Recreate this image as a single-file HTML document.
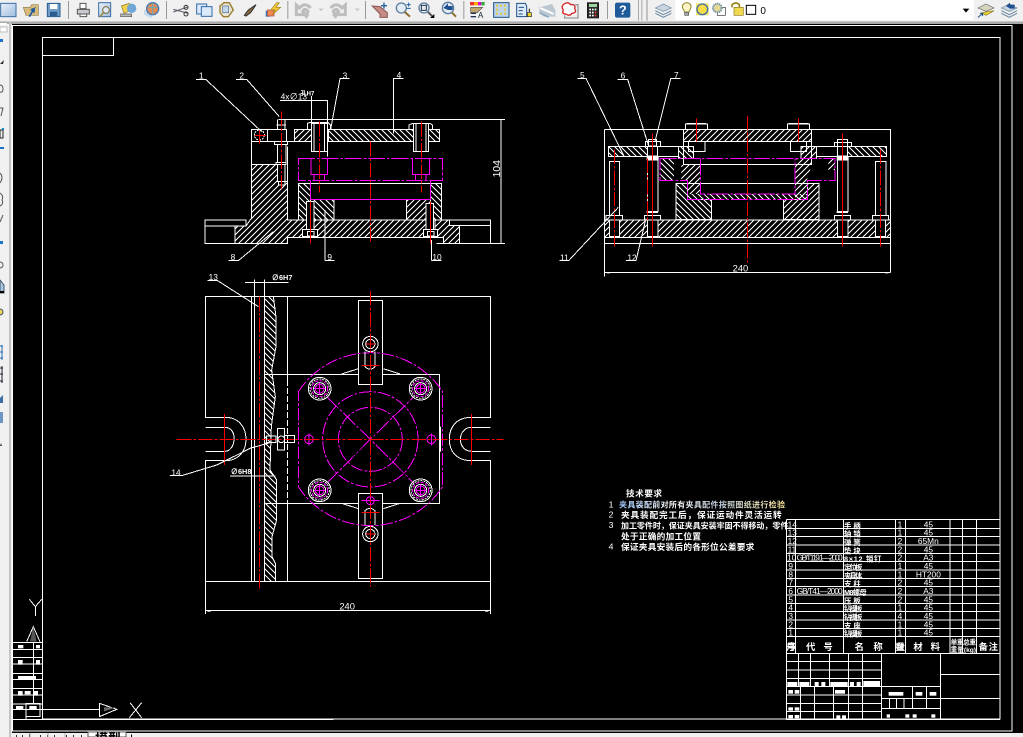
<!DOCTYPE html>
<html lang="zh">
<head>
<meta charset="utf-8">
<title>CAD</title>
<style>
html,body{margin:0;padding:0;width:1023px;height:737px;overflow:hidden;background:#f0f0f0}
svg{display:block;position:absolute;left:0;top:0}
.w{fill:none;stroke:#fff;stroke-width:3;shape-rendering:crispEdges}
.k{fill:#000;stroke:#fff;stroke-width:3;shape-rendering:crispEdges}
.m{fill:none;stroke:#f0f;stroke-width:3;shape-rendering:crispEdges}
.md{fill:none;stroke:#f0f;stroke-width:3;stroke-dasharray:50 6 8 6;shape-rendering:crispEdges}
.ds{fill:none;stroke:#f0f;stroke-width:3;stroke-dasharray:38 6 8 6;shape-rendering:crispEdges}
.r{fill:none;stroke:#f00;stroke-width:3;stroke-dasharray:44 6 8 6;shape-rendering:crispEdges}
.rs{fill:none;stroke:#f00;stroke-width:3;shape-rendering:crispEdges}
.h1{fill:url(#h1);stroke:#fff;stroke-width:3;shape-rendering:crispEdges}
.h2{fill:url(#h2);stroke:#fff;stroke-width:3;shape-rendering:crispEdges}
.f1{fill:url(#h1);stroke:none}
.f2{fill:url(#h2);stroke:none}
text{fill:#fff;font-family:"Liberation Sans","Noto Sans CJK SC",sans-serif}
.n{font-size:25px}
.c{font-size:24px;font-weight:bold;font-family:"Noto Sans CJK SC","Liberation Sans",sans-serif}
.b{fill:#fff;stroke:none}
</style>
</head>
<body>
<svg width="1023" height="737" viewBox="0 0 1023 737" xmlns="http://www.w3.org/2000/svg">
<defs>
<pattern id="h1" width="18" height="18" patternUnits="userSpaceOnUse"><path d="M-2 20L20-2M-2 2L2-2M16 20L20 16" stroke="#fff" stroke-width="3" fill="none" shape-rendering="crispEdges"/></pattern>
<pattern id="h2" width="18" height="18" patternUnits="userSpaceOnUse"><path d="M-2-2L20 20M-2 16L2 20M16-2L20 2" stroke="#fff" stroke-width="3" fill="none" shape-rendering="crispEdges"/></pattern>
<linearGradient id="bl" x1="0" y1="0" x2="1" y2="1"><stop offset="0" stop-color="#eaf2fb"/><stop offset="1" stop-color="#9dbbdc"/></linearGradient>
<linearGradient id="tx" x1="0" y1="0" x2="1" y2="0"><stop offset="0" stop-color="#9ec8ff"/><stop offset=".3" stop-color="#fff"/><stop offset=".6" stop-color="#bcd"/><stop offset="1" stop-color="#ffe9a0"/></linearGradient>
</defs>

<!-- chrome backgrounds -->
<rect x="0" y="0" width="1023" height="737" fill="#f0f0f0"/>
<rect x="0" y="21" width="1023" height="1" fill="#c8c8c8"/>
<rect x="0" y="22" width="1023" height="2" fill="#a9a9a9"/>
<rect x="9" y="22" width="2" height="715" fill="#c4c4c4"/>
<rect x="0" y="23" width="7" height="2" fill="#fff"/>
<rect x="0" y="27" width="7" height="5" fill="#fff" stroke="#bbb"/>

<!-- toolbar left -->
<g transform="scale(.33333)">
 <rect x="2" y="10" width="46" height="40" fill="url(#bl)" stroke="#3a6ea5" stroke-width="3"/>
 <path d="M70 22H90L95 14H115V46H78Z" fill="#d6bb7a" stroke="#8b7b48" stroke-width="2"/><path d="M88 50L102 26L92 30M102 26V38" stroke="#1c5a9e" stroke-width="5" fill="none"/>
 <path d="M142 10H180V50H142Z" fill="#6f9cc8" stroke="#2a5c90" stroke-width="3"/><rect x="150" y="12" width="22" height="15" fill="#fff"/><rect x="150" y="35" width="22" height="13" fill="#2a5c90"/>
 <rect x="204" y="3" width="3" height="54" fill="#999"/>
 <path d="M240 10H258V26H240Z" fill="#fff" stroke="#555" stroke-width="3"/><path d="M232 28H268V42H232Z" fill="#c9c9cf" stroke="#555" stroke-width="3"/><path d="M240 42H260V50H240Z" fill="#fff" stroke="#555" stroke-width="3"/>
 <rect x="296" y="8" width="36" height="42" fill="url(#bl)" stroke="#3a6ea5" stroke-width="3"/><circle cx="318" cy="30" r="10" fill="#dfe9f4" stroke="#7a6a3a" stroke-width="3"/><path d="M310 38L300 50" stroke="#a08a4a" stroke-width="5"/>
 <path d="M364 18L388 10L396 30L372 40Z" fill="#f2d04c" stroke="#8b7b20" stroke-width="2"/><circle cx="395" cy="25" r="14" fill="#6ea7d8"/><path d="M362 42H395V50H362Z" fill="#bbb" stroke="#555" stroke-width="2"/>
 <path d="M432 28L455 40V55L432 44Z" fill="#c5d7ea"/><circle cx="458" cy="26" r="18" fill="#e38b55" stroke="#3a77b5" stroke-width="4"/><path d="M445 22H472M458 8V44" stroke="#6ab" stroke-width="3"/>
 <rect x="498" y="3" width="3" height="54" fill="#999"/>
 <path d="M520 28L565 40M520 36L565 20" stroke="#5a5a6a" stroke-width="3"/><circle cx="558" cy="22" r="6" fill="none" stroke="#333" stroke-width="3"/><circle cx="558" cy="42" r="6" fill="none" stroke="#333" stroke-width="3"/>
 <rect x="590" y="12" width="30" height="30" fill="#dceafa" stroke="#2e6aa8" stroke-width="3"/><rect x="604" y="20" width="32" height="29" fill="#dceafa" stroke="#2e6aa8" stroke-width="3"/>
 <path d="M660 18L672 8H688L700 30L685 50H670L660 38Z" fill="#e7e3d4" stroke="#9a7b2c" stroke-width="4"/><rect x="668" y="18" width="18" height="20" fill="#c4d7ea" stroke="#57708a" stroke-width="2"/>
 <path d="M733 46L745 30L768 14L752 38L738 48Z" fill="#8a6a40" stroke="#333" stroke-width="3"/>
 <rect x="797" y="32" width="14" height="18" fill="#3a77c2"/><rect x="802" y="30" width="20" height="18" fill="#ec8a52" stroke="#a44" stroke-width="2"/><path d="M830 8L812 30H826L818 44L842 22H828L838 8Z" fill="#f3c93a" stroke="#a58015" stroke-width="2"/>
 <rect x="862" y="3" width="3" height="54" fill="#999"/>
 <path d="M932 24Q915 5 898 24L889 15V44H918L908 34Q915 22 924 34L918 54" fill="none" stroke="#bdbdbd" stroke-width="9"/>
 <path d="M955 26H971L963 33Z" fill="#c4c4c4"/>
 <path d="M992 24Q1009 5 1026 24L1036 15V44H1006L1016 34Q1009 22 1000 34L1008 54" fill="none" stroke="#bdbdbd" stroke-width="9"/>
 <path d="M1064 26H1080L1072 33Z" fill="#c4c4c4"/>
 <rect x="1095" y="3" width="3" height="54" fill="#999"/>
 <path d="M1117 18L1140 42V52H1162V38L1140 20Z" fill="#c78a86" stroke="#8a5552" stroke-width="3"/><path d="M1152 8V26M1143 17H1161" stroke="#1f5f9e" stroke-width="4"/>
 <circle cx="1204" cy="24" r="15" fill="#e4edf6" stroke="#5d7f9f" stroke-width="4"/><path d="M1214 36L1230 50" stroke="#8b6d2f" stroke-width="6"/><path d="M1220 14H1232M1226 8V20M1220 25H1232" stroke="#1f5f9e" stroke-width="3"/>
 <circle cx="1272" cy="24" r="15" fill="#e4edf6" stroke="#5d7f9f" stroke-width="4"/><rect x="1264" y="16" width="15" height="15" fill="none" stroke="#234" stroke-width="3"/><path d="M1284 36L1296 48" stroke="#555" stroke-width="6"/><path d="M1290 54H1303V42Z" fill="#000"/>
 <circle cx="1344" cy="24" r="17" fill="#e4edf6" stroke="#5d7f9f" stroke-width="4"/><path d="M1330 24L1344 10V18H1358V30H1344Z" fill="#1f4f8e"/><path d="M1356 38L1368 50" stroke="#8b6d2f" stroke-width="6"/>
 <rect x="1390" y="3" width="3" height="54" fill="#999"/>
 <rect x="1410" y="6" width="12" height="10" fill="#e33"/><rect x="1422" y="6" width="12" height="10" fill="#fa0"/><rect x="1434" y="6" width="10" height="10" fill="#d0d"/><rect x="1444" y="6" width="10" height="10" fill="#3a3"/>
 <path d="M1412 22H1448L1432 38H1412Z" fill="#bfa56d" stroke="#555" stroke-width="2"/><text x="1434" y="54" style="font-size:24px;fill:#123">A</text><path d="M1412 40H1428M1412 50H1428" stroke="#235" stroke-width="4"/>
 <rect x="1481" y="8" width="46" height="44" fill="#bcd5ea" stroke="#1d4f86" stroke-width="3"/>
 <g fill="#e3c63c"><rect x="1488" y="14" width="6" height="6"/><rect x="1500" y="14" width="6" height="6"/><rect x="1512" y="14" width="6" height="6"/><rect x="1488" y="26" width="6" height="6"/><rect x="1512" y="26" width="6" height="6"/><rect x="1500" y="38" width="6" height="6"/><rect x="1488" y="38" width="6" height="6"/><rect x="1512" y="38" width="6" height="6"/></g>
</g>

<!-- toolbar right -->
<g transform="translate(512,0) scale(.33333)">
 <path d="M14 10H40L44 18V50H14Z" fill="#dceafa" stroke="#1d4f86" stroke-width="3"/><path d="M20 22H36M20 32H32M20 42H32" stroke="#1d4f86" stroke-width="3"/><rect x="46" y="38" width="12" height="12" fill="#f0d030" stroke="#222" stroke-width="2"/><path d="M52 26V36" stroke="#111" stroke-width="3"/>
 <path d="M82 22L120 12L130 30L130 50H95L82 38Z" fill="#bcc7d2"/><path d="M85 24L125 42" stroke="#fff" stroke-width="6"/><path d="M82 38L110 52" stroke="#7aa0c0" stroke-width="4"/>
 <path d="M190 14H198V54H158V46" fill="none" stroke="#999" stroke-width="4"/><path d="M156 12Q168 4 176 14Q192 12 188 26Q196 38 180 40Q172 50 162 42Q148 42 154 30Q146 20 156 12Z" fill="#fff" stroke="#d42626" stroke-width="4"/>
 <rect x="226" y="8" width="34" height="46" fill="#2a2a2a" stroke="#111" stroke-width="2"/><rect x="231" y="12" width="24" height="9" fill="#9ed49e"/><g fill="#fff"><rect x="232" y="26" width="5" height="5"/><rect x="240" y="26" width="5" height="5"/><rect x="248" y="26" width="5" height="5"/><rect x="232" y="35" width="5" height="5"/><rect x="240" y="35" width="5" height="5"/><rect x="232" y="44" width="5" height="5"/><rect x="240" y="44" width="5" height="5"/></g><g fill="#e33"><rect x="248" y="35" width="5" height="5"/><rect x="248" y="44" width="5" height="5"/></g>
 <rect x="285" y="3" width="3" height="54" fill="#999"/>
 <rect x="309" y="8" width="46" height="45" rx="6" fill="#1f5a9a"/><text x="321" y="44" style="font-size:38px;font-weight:bold;fill:#fff">?</text>
 <rect x="378" y="0" width="3" height="62" fill="#aaa"/><rect x="388" y="0" width="3" height="62" fill="#aaa"/><rect x="403" y="0" width="4" height="62" fill="#aaa"/>
 <path d="M430 24L454 12L478 24L454 34Z" fill="#c9d6e2" stroke="#67839e" stroke-width="2"/><path d="M430 32L454 44L478 32M430 40L454 52L478 40" fill="none" stroke="#67839e" stroke-width="3"/>
 <rect x="490" y="0" width="896" height="60" rx="6" fill="#fff"/>
 <path d="M524 8Q538 10 537 22Q533 32 531 36H518Q516 32 511 22Q511 10 524 8Z" fill="#fff6c8" stroke="#8f8a2c" stroke-width="3"/><rect x="518" y="37" width="12" height="9" fill="#aaa" stroke="#555" stroke-width="2"/>
 <rect x="552" y="10" width="38" height="36" fill="#eee26a"/><circle cx="571" cy="28" r="16" fill="#f6dc46" stroke="#3e6ea3" stroke-width="4"/>
 <rect x="616" y="22" width="24" height="24" fill="#fff" stroke="#333" stroke-width="2"/><circle cx="616" cy="24" r="13" fill="#e2d998" stroke="#7892ac" stroke-width="6" stroke-dasharray="4 2"/>
 <path d="M660 22V14Q672 4 682 14V24" fill="none" stroke="#96861c" stroke-width="5"/><rect x="666" y="22" width="28" height="24" fill="#f0d94e" stroke="#8a7a18" stroke-width="2"/>
 <rect x="703" y="16" width="28" height="27" fill="#fff" stroke="#000" stroke-width="3"/>
 <text x="745" y="42" style="font-size:30px;fill:#000">0</text>
 <path d="M1352 26H1372L1362 38Z" fill="#000"/>
 <path d="M1398 24L1422 12L1446 24L1422 34Z" fill="#d6d6c0" stroke="#666" stroke-width="2"/><path d="M1410 38L1446 32L1422 46Z" fill="#f0d93c" stroke="#8a7a18" stroke-width="2"/><path d="M1398 52L1412 40M1412 40H1404M1412 40V48" stroke="#1d4f86" stroke-width="3" fill="none"/>
 <path d="M1468 24L1492 12L1515 24L1492 34Z" fill="#c9d6e2" stroke="#67839e" stroke-width="2"/><path d="M1468 32L1492 44L1515 32M1468 40L1492 52L1515 40" fill="none" stroke="#67839e" stroke-width="3"/><path d="M1482 18L1494 8V14H1508V26H1494Z" fill="#1f4f8e"/>
</g>

<!-- left toolbar fragments -->
<g>
 <rect x="0" y="39" width="3" height="3" fill="#1a73c8"/>
 <path d="M0 64L4 60L3 64Z" fill="#222"/>
 <path d="M0 85Q3 85 3 89Q3 93 0 92" fill="none" stroke="#555"/>
 <path d="M0 108L3 108L1 116" fill="none" stroke="#555"/>
 <rect x="0" y="130" width="3" height="8" fill="none" stroke="#222"/><rect x="2" y="128" width="2" height="2" fill="#18c"/>
 <rect x="0" y="147" width="4" height="2" fill="#1a73c8"/>
 <path d="M0 173Q4 177 0 183" fill="none" stroke="#555"/>
 <path d="M0 193Q4 196 2 200Q4 204 0 206" fill="none" stroke="#555"/>
 <path d="M0 222L3 215" stroke="#555"/>
 <rect x="0" y="241" width="3" height="3" fill="#1a73c8"/>
 <circle cx="0" cy="265" r="3" fill="none" stroke="#555"/>
 <path d="M0 280L4 285V293H0Z" fill="#a9c6e2" stroke="#456"/><rect x="0" y="291" width="4" height="2" fill="#000"/>
 <circle cx="0" cy="312" r="3" fill="#efd25a" stroke="#456"/>
 <path d="M0 346H3M0 352H3M0 358H3M2 345V360" stroke="#2a6cb0"/>
 <path d="M0 368H3M0 374H3M0 381H3M2 366V383" stroke="#223"/>
 <path d="M0 398L3 395V403H0Z" fill="#3a6ea5"/>
 <rect x="0" y="412" width="3" height="11" fill="#6c95c4"/>
 <path d="M0 446L1 443L2 446Z" fill="#333"/>
</g>

<!-- canvas -->
<rect x="12" y="24" width="1011" height="709" fill="#000"/>
<rect x="12.5" y="25.5" width="999.5" height="705.5" fill="none" stroke="#fff" stroke-width="1" shape-rendering="crispEdges"/>
<rect x="42.5" y="37.5" width="957.5" height="681.5" fill="none" stroke="#fff" stroke-width="1" shape-rendering="crispEdges"/>
<rect x="42.5" y="37.5" width="71" height="18" fill="none" stroke="#fff" stroke-width="1" shape-rendering="crispEdges"/>

<!-- FRONT VIEW -->
<g transform="translate(190,70) scale(.33333)">
 <path class="h1" d="M184 283H262V335H293V450H350V502H293V520H135V468H168L184 445Z"/>
 <path class="w" d="M45 450H168V468H45ZM45 468V520H135M293 502H760V520H902V450H778V467H902M293 450H755"/>
 <path class="h1" d="M372 450H710V502H372Z"/>
 <path class="h1" d="M735 450H778V467H808V520H760V502H735Z"/>
 <path class="w" d="M184 178V445M184 283H262M293 230V450M184 178H232V215H184ZM232 178H262M232 215H262M262 178H290V215H262M293 215H313"/>
 <path class="h1" d="M313 178H365V215H313Z"/>
 <path class="h2" d="M415 178H670V215H415Z"/>
 <path class="h2" d="M715 178H748V215H715Z"/>
 <path class="w" d="M352 178V160L362 157H413L422 165V178M657 178V165L668 160H720L727 165V178"/>
 <path class="w" d="M364 160H372V245H364ZM404 160H413V245H404ZM364 245H413M372 160H404M670 160H678V245H670ZM708 160H716V245H708ZM670 245H716"/>
 <path class="w" d="M262 148V178M285 150V178M259 165H288M253 215H293V224H253ZM262 224H288V278H262ZM258 278H288V283H258Z"/>
 <path class="k" d="M262 283H285V335H262ZM265 335H285V345H265Z"/>
 <circle class="w" cx="208" cy="195" r="15" stroke-dasharray="6 3"/>
 <path class="h2" d="M325 340H362V450H325Z"/>
 <path class="h2" d="M362 388H432V450H362Z"/>
 <path class="h1" d="M650 388H722V450H650Z"/>
 <path class="h2" d="M722 340H755V450H722Z"/>
 <path class="w" d="M325 340H755"/>
 <path class="k" d="M350 395H372V478H350ZM708 400H730V478H708ZM337 478H382V500H337ZM700 478H742V500H700Z"/>
 <path class="w" d="M352 484H372V498H352ZM712 484H732V498H712Z"/>
 <path class="md" d="M325 265H758V332H325Z"/>
 <path class="m" d="M363 267V313H413V267M372 313V332M404 313V332M667 267V313H718V267M677 313V332M708 313V332M362 332V388H722V332"/>
 <path class="r" d="M541 215V520M275 125V355"/>
 <path class="r" d="M388 155V368M694 155V368"/>
 <path class="rs" d="M361 395V520M722 395V520M208 180V220M195 197H228"/>
 <path class="w" d="M265 148H945M933 148V520M740 520H945"/>
 <path class="w" d="M270 92H412V260M364 78V160"/>
 <text x="272" y="88" style="font-size:25px">4x∅13</text>
 <text x="332" y="76" style="font-size:18px;font-weight:bold">孔H7</text>
 <path class="w" d="M18 28H47L215 185M138 28H170L268 140M478 26H450L422 178M640 26H610V190M115 572H145L250 485M405 572V420M405 572H434M724 572V510M724 572H755"/>
 <text x="27" y="26" class="n">1</text><text x="148" y="26" class="n">2</text><text x="458" y="26" class="n">3</text><text x="620" y="24" class="n">4</text>
 <text x="122" y="570" class="n">8</text><text x="412" y="570" class="n">9</text><text x="727" y="570" class="n">10</text>
 <text transform="translate(930,322) rotate(-90)" style="font-size:31px">104</text>
</g>

<!-- SIDE VIEW -->
<g transform="translate(550,70) scale(.33333)">
 <path class="h1" d="M163 450H1022V502H163Z"/>
 <path class="h1" d="M400 178H785V215H400Z"/>
 <path class="h2" d="M175 229H293V260H175Z"/>
 <path class="h2" d="M893 229H1010V260H893Z"/>
 <path class="w" d="M293 229H385M293 260H385M800 229H893M800 260H893"/>
 <!-- work-piece hatch -->
 <path class="f2" d="M332 265H372V331H332Z"/>
 <path class="f1" d="M394 285H452V372H412V331H394Z"/>
 <path class="f1" d="M735 285H785L770 331H772V388H735Z"/>
 <path class="f1" d="M835 265H855V300H835Z"/>
 <path class="f1" d="M740 265H785V283H740Z"/>
 <path class="f2" d="M412 372H772V388H412Z"/>
 <path class="h2" d="M378 340H412V388H485V448H378Z"/>
 <path class="h1" d="M772 340H807V448H700V388H772Z"/>
 <path class="h2" d="M385 230H430V265H385Z"/>
 <path class="h1" d="M753 230H800V265H753Z"/>
 <path class="w" d="M407 178V162H473V178M712 178V162H778V178M409 160H468M716 160H775M400 215V283H785V215M415 215V245H465V215M721 215V245H770V215M378 340H807M163 178H1022V607M163 178V620M163 502H1022M163 520H1022"/>
 <path class="w" d="M178 275H209V436H178ZM292 270H324V425H292ZM862 270H894V425H862ZM976 275H1008V436H976Z"/>
 <path class="k" d="M168 436H218V450H168ZM283 436H332V450H283ZM853 436H902V450H853ZM967 436H1016V450H967ZM178 450H208V500H178ZM292 450H324V500H292ZM862 450H894V500H862ZM976 450H1006V500H976Z"/>
 <path class="w" d="M286 215H332V229H286ZM295 208H320V228H295ZM292 229H322V258H292ZM853 217H904V229H853ZM862 208H892V229H862ZM862 229H892V258H862Z"/>
 <rect x="290" y="259" width="36" height="12" fill="#fff"/><rect x="860" y="259" width="36" height="12" fill="#fff"/>
 <rect x="290" y="423" width="34" height="6" fill="#fff"/><rect x="860" y="423" width="34" height="6" fill="#fff"/>
 <path class="md" d="M330 265H855V331H772V388H412V331H330Z"/>
 <path class="md" d="M452 265V372H735V265"/>
 <path class="r" d="M592 138V578M194 238V530M992 238V530"/>
 <path class="rs" d="M440 145V215M745 145V215M307 190V530M877 190V530"/>
 <path class="r" d="M292 265V450"/>
 <path class="w" d="M163 607H1022"/>
 <rect x="170" y="607" width="10" height="3" fill="#fff"/><rect x="1005" y="607" width="10" height="3" fill="#fff"/>
 <text x="548" y="605" style="font-size:28px">240</text>
 <path class="w" d="M82 25H108L220 255M202 28H233L295 225M392 26H362L315 215M28 572H56L205 412M228 572H258L288 445"/>
 <text x="90" y="24" class="n">5</text><text x="212" y="26" class="n">6</text><text x="372" y="24" class="n">7</text><text x="30" y="572" class="n">11</text><text x="232" y="572" class="n">12</text>
</g>

<!-- TOP VIEW -->
<g transform="translate(170,270) scale(.33333)">
 <path class="w" d="M106 79H962V442H905C860 442 838 470 838 508C838 545 860 572 905 572H962V934H106V572H165C205 572 228 545 228 508C228 470 205 442 165 442H106V79Z"/>
 <path class="w" d="M106 472H165C205 472 198 544 165 544H106M962 472H905C860 472 860 544 905 544H962"/>
 <path class="h2" d="M284 79H310L318 140V230L305 300L316 380L304 470L300 600L320 630V750L306 800V860L316 880V934H284Z"/>
 <path class="w" d="M245 79V934M253 79V934M284 79V934M352 79V330M352 700V934M245 79H284M245 934H284"/>
 <path class="w" d="M352 330V700" style="stroke-dasharray:18 6"/>
 <path class="w" d="M284 313H808V700H284Z"/>
 <rect x="565" y="91" width="73" height="253" class="k"/>
 <rect x="565" y="670" width="73" height="256" class="k"/>
 <path class="w" d="M515 312L565 296M640 296L690 312M515 700L565 716M640 716L690 700"/>
 <circle class="ds" cx="601" cy="508" r="143"/>
 <circle class="ds" cx="601" cy="508" r="96"/>
 <path class="ds" d="M385 365A259 259 0 0 1 818 365V650A259 259 0 0 1 385 650Z"/>
 <path class="md" d="M470 380L601 508L732 380M470 640L601 508L732 640"/>
 <circle class="m" cx="417" cy="508" r="13"/><circle class="m" cx="784" cy="508" r="13"/><path class="m" d="M417 490V526M784 490V526"/>
 <circle class="w" cx="449" cy="356" r="34"/><circle class="w" cx="449" cy="356" r="29" stroke-dasharray="6 3"/><circle class="m" cx="449" cy="356" r="24" stroke-dasharray="10 4"/><circle class="w" cx="449" cy="356" r="18"/><circle class="m" cx="449" cy="356" r="13"/>
 <circle class="w" cx="752" cy="356" r="34"/><circle class="w" cx="752" cy="356" r="29" stroke-dasharray="6 3"/><circle class="m" cx="752" cy="356" r="24" stroke-dasharray="10 4"/><circle class="w" cx="752" cy="356" r="18"/><circle class="m" cx="752" cy="356" r="13"/>
 <circle class="w" cx="449" cy="661" r="34"/><circle class="w" cx="449" cy="661" r="29" stroke-dasharray="6 3"/><circle class="m" cx="449" cy="661" r="24" stroke-dasharray="10 4"/><circle class="w" cx="449" cy="661" r="18"/><circle class="m" cx="449" cy="661" r="13"/>
 <circle class="w" cx="752" cy="661" r="34"/><circle class="w" cx="752" cy="661" r="29" stroke-dasharray="6 3"/><circle class="m" cx="752" cy="661" r="24" stroke-dasharray="10 4"/><circle class="w" cx="752" cy="661" r="18"/><circle class="m" cx="752" cy="661" r="13"/>
 <path class="m" d="M432 356H466M449 338V374M735 356H769M752 338V374M432 661H466M449 644V678M735 661H769M752 644V678"/>
 <path class="w" d="M585 245V290Q600 305 615 290V245M585 765V722Q600 708 615 722V765"/>
 <path class="m" d="M575 692H628M601 678V706"/><circle class="m" cx="601" cy="692" r="12"/>
 <circle class="w" cx="601" cy="222" r="23"/><circle class="w" cx="601" cy="222" r="14"/><circle class="w" cx="601" cy="792" r="23"/><circle class="w" cx="601" cy="792" r="14"/>
 <path class="rs" d="M574 287H628M574 728H628M588 222H615M601 209V235M588 792H615M601 779V805"/>
 <path class="r" d="M601 63V950M20 508H1000"/>
 <path class="r" d="M268 79V962"/>
 <path class="rs" d="M163 432V585M904 432V585"/>
 <path class="w" d="M290 498H318V518H290ZM322 476H344V540H322ZM344 496H374V518H344Z"/>
 <circle class="w" cx="334" cy="508" r="10"/>
 <rect x="808" y="470" width="5" height="75" fill="#fff"/>
 <path class="w" d="M106 934V1032M962 934V1032M106 1022H962"/>
 <rect x="112" y="1022" width="10" height="3" fill="#fff"/><rect x="945" y="1022" width="10" height="3" fill="#fff"/>
 <text x="508" y="1018" style="font-size:28px">240</text>
 <path class="w" d="M225 37H355M253 28V80M284 28V80M180 618H316"/>
 <text x="305" y="30" style="font-size:22px;font-weight:bold">∅6H7</text>
 <text x="182" y="612" style="font-size:22px;font-weight:bold">∅6H8</text>
 <path class="w" d="M112 32H143L265 110M0 617H35L140 585L215 548L240 535L300 518"/>
 <text x="116" y="30" class="n">13</text><text x="4" y="616" class="n">14</text>
</g>

<!-- TITLE BLOCK + NOTES -->
<g transform="translate(600,480) scale(.33333)">
 <text x="78" y="50" class="c" style="font-size:26px" textLength="108" lengthAdjust="spacing">技术要求</text>
 <text x="26" y="82" style="font-size:26px">1</text>
 <text x="57" y="82" class="c" style="font-size:24px;fill:url(#tx)" textLength="498" lengthAdjust="spacing">夹具装配前对所有夹具配件按照图纸进行检验</text>
 <text x="26" y="112" style="font-size:26px">2</text>
 <text x="63" y="114" class="c" style="font-size:26px" textLength="482" lengthAdjust="spacing">夹具装配完工后，保证运动件灵活运转</text>
 <text x="26" y="144" style="font-size:26px">3</text>
 <text x="63" y="146" class="c" style="font-size:24px" textLength="502" lengthAdjust="spacing">加工零件时，保证夹具安装牢固不得移动，零件</text>
 <text x="63" y="178" class="c" style="font-size:26px" textLength="240" lengthAdjust="spacing">处于正确的加工位置</text>
 <text x="26" y="208" style="font-size:26px">4</text>
 <text x="63" y="210" class="c" style="font-size:26px" textLength="400" lengthAdjust="spacing">保证夹具安装后的各形位公差要求</text>

 <path class="w" d="M560 118H1200V718M560 118V718H1200M560 145H1200M560 170H1200M560 195H1200M560 220H1200M560 245H1200M560 270H1200M560 295H1200M560 320H1200M560 345H1200M560 370H1200M560 395H1200M560 420H1200M560 445H1200M560 470H1200M560 520H1200"/>
 <path class="w" d="M587 118V520M730 118V520M886 118V520M916 118V520M1050 118V520M1088 118V520M1130 118V520"/>
 <g class="n">
  <text x="563" y="142">14</text><text x="563" y="167">13</text><text x="563" y="192">12</text><text x="563" y="217">11</text><text x="561" y="242">10</text><text x="565" y="267">9</text><text x="565" y="292">8</text><text x="565" y="317">7</text><text x="565" y="342">6</text><text x="565" y="367">5</text><text x="565" y="392">4</text><text x="565" y="417">3</text><text x="565" y="442">2</text><text x="565" y="467">1</text>
  <text x="590" y="242" textLength="138" lengthAdjust="spacing">GB/T119.1—2000</text>
  <text x="590" y="342" textLength="138" lengthAdjust="spacing">GB/T41—2000</text>
  <g text-anchor="middle">
  <text x="900" y="142">1</text><text x="900" y="167">1</text><text x="900" y="192">2</text><text x="900" y="217">2</text><text x="900" y="242">2</text><text x="900" y="267">1</text><text x="900" y="292">1</text><text x="900" y="317">2</text><text x="900" y="342">2</text><text x="900" y="367">2</text><text x="900" y="392">1</text><text x="900" y="417">4</text><text x="900" y="442">1</text><text x="900" y="467">1</text>
  <text x="985" y="142">45</text><text x="985" y="167">45</text><text x="985" y="192">65Mn</text><text x="985" y="217">45</text><text x="985" y="242">A3</text><text x="985" y="267">45</text><text x="985" y="292">HT200</text><text x="985" y="317">45</text><text x="985" y="342">A3</text><text x="985" y="367">45</text><text x="985" y="392">45</text><text x="985" y="417">45</text><text x="985" y="442">45</text><text x="985" y="467">45</text>
  </g>
 </g>
 <g class="c" style="font-size:22px">
  <text x="732" y="145" textLength="50" lengthAdjust="spacing">手柄</text>
  <text x="732" y="170" textLength="50" lengthAdjust="spacing">轴销</text>
  <text x="732" y="195" textLength="50" lengthAdjust="spacing">弹簧</text>
  <text x="732" y="220" textLength="50" lengthAdjust="spacing">垫块</text>
  <text x="732" y="245" textLength="112" lengthAdjust="spacing">8×12 销钉</text>
  <text x="732" y="270" textLength="55" lengthAdjust="spacing">定位板</text>
  <text x="732" y="295" textLength="55" lengthAdjust="spacing">夹具体</text>
  <text x="732" y="320" textLength="50" lengthAdjust="spacing">支柱</text>
  <text x="732" y="345" textLength="68" lengthAdjust="spacing">M8螺母</text>
  <text x="732" y="370" textLength="50" lengthAdjust="spacing">压板</text>
  <text x="732" y="395" textLength="55" lengthAdjust="spacing">钻模板</text>
  <text x="732" y="420" textLength="55" lengthAdjust="spacing">钻模板</text>
  <text x="732" y="445" textLength="50" lengthAdjust="spacing">支座</text>
  <text x="732" y="470" textLength="55" lengthAdjust="spacing">钻模板</text>
  <text x="560" y="510" style="font-size:28px" textLength="28" lengthAdjust="spacing">序号</text>
  <text x="618" y="510" style="font-size:28px" textLength="80" lengthAdjust="spacing">代号</text>
  <text x="764" y="510" style="font-size:28px" textLength="84" lengthAdjust="spacing">名称</text>
  <text x="887" y="510" style="font-size:26px" textLength="28" lengthAdjust="spacing">数量</text>
  <text x="940" y="510" style="font-size:28px" textLength="80" lengthAdjust="spacing">材料</text>
  <text x="1052" y="494" style="font-size:20px" textLength="76" lengthAdjust="spacing">单重总重</text>
  <text x="1052" y="516" style="font-size:20px" textLength="76" lengthAdjust="spacing">重量(kg)</text>
  <text x="1136" y="510" style="font-size:28px" textLength="58" lengthAdjust="spacing">备注</text>
 </g>
 <path class="w" d="M560 545H845M560 570H845M560 595H845M560 620H845M560 645H845M560 670H845M560 695H845M845 520V718M1022 520V718M1022 583H1200M1022 655H1200M845 620H1022M845 655H1022M845 685H1022"/>
 <path class="w" d="M595 520V620M631 520V620M688 520V620M745 520V620M787 520V620M602 620V718M644 620V718M700 620V718M745 620V718M787 620V718M937 620V655M980 620V655M868 655V685M890 655V685M912 655V685M937 655V685M980 655V685"/>
 <g class="b">
  <rect x="562" y="606" width="30" height="12"/><rect x="598" y="606" width="30" height="12"/><rect x="644" y="606" width="12" height="12"/><rect x="664" y="606" width="12" height="12"/><rect x="691" y="606" width="52" height="12"/><rect x="750" y="606" width="12" height="12"/><rect x="770" y="606" width="12" height="12"/><rect x="790" y="603" width="50" height="15"/>
  <rect x="565" y="630" width="14" height="11"/><rect x="584" y="630" width="14" height="11"/><rect x="705" y="630" width="30" height="11"/><rect x="565" y="682" width="14" height="10"/><rect x="584" y="682" width="14" height="10"/><rect x="565" y="705" width="14" height="10"/><rect x="584" y="705" width="14" height="10"/><rect x="709" y="706" width="12" height="10"/><rect x="726" y="706" width="12" height="10"/>
  <rect x="866" y="636" width="44" height="11"/><rect x="947" y="636" width="20" height="11"/><rect x="989" y="636" width="20" height="11"/><rect x="860" y="703" width="10" height="10"/><rect x="916" y="703" width="12" height="10"/><rect x="938" y="703" width="12" height="10"/><rect x="994" y="703" width="12" height="10"/>
 </g>
</g>

<!-- UCS + side stamp -->
<g transform="translate(0,590) scale(.33333)">
 <path class="w" d="M128 0V388M38 388H128"/>
 <path class="w" d="M38 157H128M38 178H128M38 203H128M38 222H128M38 250H128M38 268H128M38 296H128M38 315H128M38 342H128M38 358H128M100 157V342M78 342V388M78 340H120V380H78Z"/>
 <g class="b">
  <rect x="54" y="165" width="16" height="10"/><rect x="108" y="165" width="12" height="10"/><rect x="54" y="210" width="14" height="14"/><rect x="108" y="210" width="12" height="14"/><rect x="54" y="258" width="54" height="11"/><rect x="54" y="303" width="14" height="14"/><rect x="74" y="303" width="18" height="10"/><rect x="100" y="303" width="14" height="14"/><rect x="48" y="348" width="22" height="12"/><rect x="88" y="348" width="22" height="12"/>
 </g>
 <path class="w" d="M88 28L106 50L125 28M106 50V78M80 155L100 110L120 155"/>
 <path d="M90 155L100 110L110 155Z" fill="#555"/>
 <path class="w" d="M128 358H298M298 340V380L350 358Z"/>
 <path d="M312 352H350L312 364Z" fill="#666"/>
 <path class="w" d="M390 338L425 383M425 338L388 383"/>
 <path class="w" d="M38 388H1000"/>
</g>

<!-- bottom tabs -->
<rect x="12" y="733" width="1011" height="4" fill="#f0f0f0"/>
<g fill="#333">
 <rect x="16" y="735" width="1" height="2"/><rect x="22" y="735" width="1" height="2"/><rect x="29" y="734" width="1" height="3"/><rect x="40" y="735" width="1" height="2"/><rect x="47" y="735" width="1" height="2"/><rect x="54" y="735" width="1" height="2"/><rect x="66" y="735" width="1" height="2"/><rect x="73" y="735" width="1" height="2"/><rect x="81" y="735" width="1" height="2"/>
</g>
<path d="M30 733V737M48 733V737M65 733V737M88 733V737M126 733V737" stroke="#aaa" stroke-width="1"/>
<rect x="88" y="732" width="38" height="5" fill="#fff" stroke="#555" stroke-width="1"/>
<text x="95" y="743" style="font-size:13px;font-weight:bold;fill:#000" font-family="Noto Sans CJK SC">模型</text>
<text x="130" y="742" style="font-size:11px;fill:#000">I</text>
</svg>
</body>
</html>
